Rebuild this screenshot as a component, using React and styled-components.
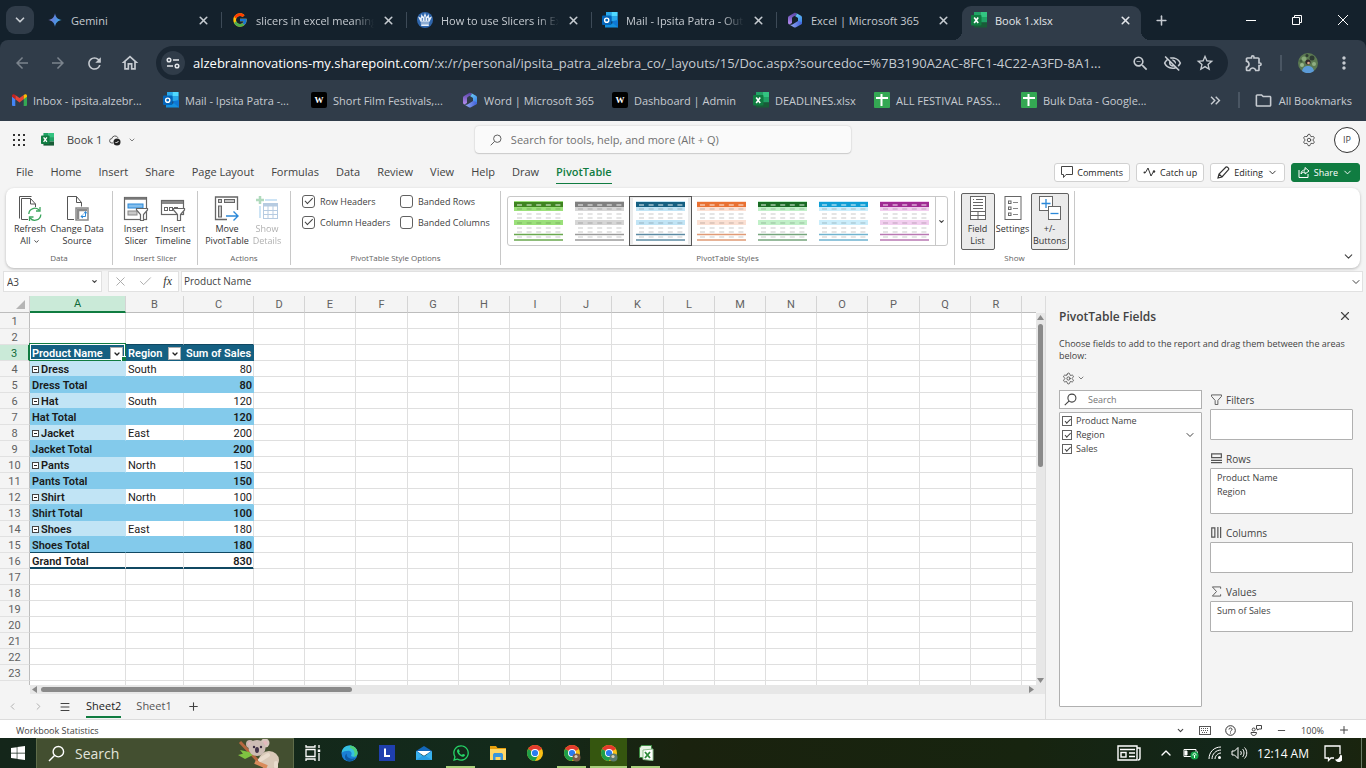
import React from 'react';
import styled, { createGlobalStyle, css } from 'styled-components';
import { FcGoogle } from 'react-icons/fc';
import { FaWindows, FaWhatsapp } from 'react-icons/fa';
import {
  MdArrowBack, MdArrowForward, MdRefresh, MdOutlineHome, MdStarOutline, MdOutlineFolder,
  MdOutlineVisibilityOff, MdOutlineExtension, MdMoreVert, MdZoomOut, MdKeyboardDoubleArrowRight,
} from 'react-icons/md';
import { ChevronDown, ChevronUp, ChevronLeft, ChevronRight, X, Plus, Minus, Menu, Check, Settings } from 'lucide-react';

const palette = {
  strip: '#14212c',
  chrome: '#303c49',
  omnibox: '#1b2733',
  chromeText: '#c6cbd1',
  page: '#f4f4f4',
  line: '#e1e1e1',
  text: '#424242',
  green: '#107c41',
  pivotHead: '#156082',
  pivotDark: '#104862',
  pivotMid: '#83caeb',
  pivotLight: '#c1e4f5',
};

const uiFont = "'Segoe UI', 'Open Sans', 'Noto Sans', sans-serif";

const GlobalStyle = createGlobalStyle`
  * { box-sizing: border-box; }
  body {
    margin: 0;
    font-family: ${uiFont};
    font-size: 11px;
    color: ${palette.text};
    background: ${palette.page};
  }
  button, input {
    font: inherit;
    color: inherit;
  }
  button {
    border: 0;
    padding: 0;
    background: none;
    display: inline-flex;
    align-items: center;
    justify-content: center;
  }
  a { color: inherit; text-decoration: none; }
  svg { display: block; flex: none; }
`;

const Page = styled.div`
  display: flex;
  flex-direction: column;
  height: 100vh;
  overflow: hidden;
`;

/* ---------- logos ---------- */

const GeminiLogo = () => (
  <svg width="16" height="16" viewBox="0 0 16 16">
    <defs>
      <linearGradient id="gem" x1="0" x2="1" y1="0.3" y2="0.6">
        <stop offset="0" stopColor="#8e75c8" />
        <stop offset="0.45" stopColor="#5a86e0" />
        <stop offset="1" stopColor="#35b6e6" />
      </linearGradient>
    </defs>
    <path fill="url(#gem)" d="M8 1.2C8.5 5 11 7.5 14.8 8 11 8.500 8.500 11 8 14.800 7.500 11 5 8.500 1.200 8 5 7.500 7.500 5 8 1.200z" />
  </svg>
);

const CrownLogo = () => (
  <svg width="16" height="16" viewBox="0 0 16 16">
    <circle cx="8" cy="8" r="8" fill="#2f66ac" />
    <path fill="#e9f1fa" d="M3.500 9.800 1 4.500l3 1.300L4.200 2 6.500 5 8 .8 9.500 5l2.300-3 .2 3.800 3-1.300-2.500 5.300z" />
    <path stroke="#2f66ac" strokeWidth="0.9" d="M5.300 8.800V6M8 8.800V4.500M10.700 8.800V6" />
    <path fill="#e9f1fa" d="M3.800 10.600h8.400v1H3.800zM4.200 12.300h7.600v1.800H4.200z" />
  </svg>
);

const OutlookLogo = () => (
  <svg width="16" height="16" viewBox="0 0 16 16">
    <path fill="#0a6cbd" d="M4 0h11.500v9H4z" />
    <path fill="#28a8ea" d="M4 0h5.500v4.500H4z" />
    <path fill="#50d9ff" d="M9.500 0h6v4.500h-6z" />
    <path fill="#28a8ea" d="M9.500 4.500h6V9h-6z" />
    <path fill="#1490df" d="M3 15.500V9l6 3 7-4v7.500z" />
    <path fill="#0f78d4" d="M9 9.500 16 15.500V8z" />
    <rect x="0" y="3.500" width="9.500" height="9.500" rx="1" fill="#0364b8" />
    <circle cx="4.700" cy="8.200" r="2.100" fill="none" stroke="#fff" strokeWidth="1.400" />
  </svg>
);

const MicrosoftLogo = () => (
  <svg width="16" height="16" viewBox="0 0 16 16">
    <defs>
      <linearGradient id="msA" x1="0" x2="1" y1="0" y2="0">
        <stop offset="0" stopColor="#9fb0f5" />
        <stop offset="1" stopColor="#3d5fd8" />
      </linearGradient>
      <linearGradient id="msB" x1="0.5" x2="0.4" y1="0" y2="1">
        <stop offset="0" stopColor="#5a45a8" />
        <stop offset="1" stopColor="#b58cf0" />
      </linearGradient>
      <linearGradient id="msC" x1="0" x2="0.5" y1="0" y2="1">
        <stop offset="0" stopColor="#6fd0f5" />
        <stop offset="1" stopColor="#3f86ea" />
      </linearGradient>
    </defs>
    <path fill="url(#msB)" d="M7.500.8 2 4C1.300 4.400 1 5 1 5.800v4.700c0 1 .6 1.600 1.300 2L5 11V6.500c0-.8.3-1.300 1-1.700L9.500 3V1.200C9 .7 8.200.5 7.500.8z" />
    <path fill="url(#msC)" d="M9.500 1.200 14 3.800c.7.4 1 1 1 1.800v5c0 .8-.3 1.400-1 1.800l-3-2V6L8 4l1.500-1z" />
    <path fill="url(#msA)" d="M14 12.400 9 15.300c-.8.4-1.400.4-2.200 0l-4.500-2.700C3.500 13 5 12.700 5.800 12.200L11 9v-.5l4 2c0 .9-.3 1.500-1 1.900z" />
  </svg>
);

const ExcelLogo = ({ size = 16 }) => (
  <svg width={size} height={size} viewBox="0 0 16 16">
    <path fill="#21a366" d="M3 0h6.500v5H3z" />
    <path fill="#33c481" d="M9.500 0H16v5H9.500z" />
    <path fill="#107c41" d="M3 5h6.500v5.500H3z" />
    <path fill="#21a366" d="M9.500 5H16v5.500H9.500z" />
    <path fill="#185c37" d="M3 10.500h13v5H3z" />
    <rect x="0" y="3" width="10.500" height="10.500" rx="1" fill="#107c41" />
    <path fill="none" stroke="#fff" strokeWidth="1.600" d="M3.200 5.500l4 5.500M7.200 5.500l-4 5.500" />
  </svg>
);

const GmailLogo = () => (
  <svg width="15" height="12" viewBox="0 0 15 12">
    <path fill="#4285f4" d="M0 2.200 3.300 4.700V12H1a1 1 0 0 1-1-1z" />
    <path fill="#34a853" d="M15 2.200 11.700 4.700V12H14a1 1 0 0 0 1-1z" />
    <path fill="#ea4335" d="M3.300.9 7.500 4.100l4.200-3.200v4.400L7.500 8.500 3.300 5.300z" />
    <path fill="#c5221f" d="M0 1.800C0 .1 1.900-.3 3.300.9v4.400L0 2.800z" />
    <path fill="#fbbc04" d="M15 1.800C15 .1 13.100-.3 11.700.9v4.400L15 2.800z" />
  </svg>
);

const SheetLogo = () => (
  <svg width="16" height="16" viewBox="0 0 16 16">
    <rect width="16" height="16" rx="1" fill="#34a853" />
    <path fill="#fff" d="M2 5h12v2H2zM6.500 2h2v12h-2z" />
  </svg>
);

const ChromeLogo = ({ badge }) => (
  <svg width="18" height="18" viewBox="0 0 18 18">
    <circle cx="9" cy="9" r="8" fill="#fbc116" />
    <path fill="#e33b2e" d="M9 9 2.100 5A8 8 0 0 1 15.900 5z" />
    <path fill="#1e9e48" d="M9 9 2.100 5A8 8 0 0 0 9 17l3.400-6z" />
    <circle cx="9" cy="9" r="4" fill="#fff" />
    <circle cx="9" cy="9" r="3.100" fill="#2a7cf0" />
    {badge && <circle cx="13.500" cy="13.500" r="4" fill={badge} />}
    {badge && <circle cx="13" cy="12.500" r="1.600" fill="#d9cdb8" />}
  </svg>
);

const WixMark = styled.span`
  display: flex;
  align-items: center;
  justify-content: center;
  flex: none;
  width: 16px;
  height: 16px;
  border-radius: 2px;
  background: #000;
  color: #fff;
  font: bold 9px 'Liberation Serif', serif;
`;

/* ---------- browser ---------- */

const TabStrip = styled.header`
  display: flex;
  align-items: center;
  flex: none;
  height: 40px;
  padding-left: 6px;
  background: ${palette.strip};
  color: ${palette.chromeText};
`;

const TabSearch = styled.button`
  width: 28px;
  height: 28px;
  margin-right: 3px;
  border-radius: 9px;
  background: ${palette.chrome};
`;

const Tab = styled.div`
  position: relative;
  display: flex;
  align-items: center;
  gap: 8px;
  flex: 0 1 185px;
  min-width: 0;
  height: 16px;
  padding: 0 11px 0 10px;
  border-right: 1px solid ${(props) => (props.$last ? 'transparent' : '#3d4a57')};

  ${(props) => props.$active && css`
    flex-basis: 179px;
    align-self: flex-end;
    height: 34px;
    padding: 0 9px 6px;
    border: 0;
    border-radius: 9px 9px 0 0;
    background: ${palette.chrome};
    color: #e3e6ea;

    &::before, &::after {
      content: '';
      position: absolute;
      bottom: 0;
      width: 9px;
      height: 9px;
    }
    &::before {
      right: 100%;
      background: radial-gradient(circle at 0 0, transparent 9px, ${palette.chrome} 9px);
    }
    &::after {
      left: 100%;
      background: radial-gradient(circle at 100% 0, transparent 9px, ${palette.chrome} 9px);
    }
  `}
`;

const TabTitle = styled.span`
  flex: 1;
  min-width: 0;
  overflow: hidden;
  white-space: nowrap;
  font-size: 11px;
  mask-image: ${(props) => (props.$fade ? 'linear-gradient(90deg, #000 82%, transparent)' : 'none')};
`;

const NewTab = styled.button`
  width: 40px;
  height: 28px;
`;

const WindowControls = styled.div`
  display: flex;
  margin-left: auto;
  color: #fff;

  button {
    width: 46px;
    height: 30px;
  }
`;

const ToolbarBack = styled.div`
  flex: none;
  background: ${palette.strip};
`;

const Toolbar = styled.nav`
  display: flex;
  align-items: center;
  height: 46px;
  padding: 0 12px;
  border-radius: 8px 8px 0 0;
  background: ${palette.chrome};
  color: ${palette.chromeText};
`;

const NavButton = styled.button`
  width: 20px;
  margin-right: 16px;
  opacity: ${(props) => (props.disabled ? 0.5 : 1)};
`;

const Omnibox = styled.div`
  display: flex;
  align-items: center;
  flex: 1;
  min-width: 0;
  gap: 13px;
  height: 34px;
  padding: 0 13px 0 5px;
  border-radius: 17px;
  background: ${palette.omnibox};
`;

const SiteInfo = styled.button`
  flex: none;
  width: 24px;
  height: 24px;
  margin-right: -5px;
  border-radius: 50%;
  background: ${palette.chrome};
`;

const Url = styled.div`
  flex: 1;
  min-width: 0;
  overflow: hidden;
  white-space: nowrap;
  text-overflow: ellipsis;
  font-size: 13px;

  b {
    font-weight: 400;
    color: #fff;
  }
`;

const ToolbarEnd = styled.div`
  display: flex;
  align-items: center;
  gap: 16px;
  margin-left: 16px;
`;

const Divider = styled.i`
  flex: none;
  width: 2px;
  height: 16px;
  background: #4a5663;
`;

const BookmarkBar = styled.nav`
  display: flex;
  align-items: center;
  flex: none;
  height: 35px;
  padding: 0 14px 7px 12px;
  background: ${palette.chrome};
  color: ${palette.chromeText};
`;

const Bookmark = styled.a`
  display: flex;
  align-items: center;
  gap: 6px;
  flex: 0 1 ${(props) => props.$width}px;
  min-width: 0;
  white-space: nowrap;
`;

const BookmarkEnd = styled.div`
  display: flex;
  align-items: center;
  gap: 14px;
  margin-left: auto;
  white-space: nowrap;

  a {
    display: flex;
    align-items: center;
    gap: 6px;
  }
`;

/* ---------- app header ---------- */

const AppHeader = styled.header`
  display: grid;
  grid-template-columns: 10fr 376px 11fr;
  align-items: center;
  flex: none;
  height: 37px;
  padding: 0 6px 0 12px;
`;

const FileTitle = styled.div`
  display: flex;
  align-items: center;
  gap: 7px;

  svg:first-child { margin-right: 8px; }
  span { margin-left: 6px; }
`;

const HeaderSearch = styled.label`
  display: flex;
  align-items: center;
  gap: 9px;
  height: 27px;
  padding: 0 15px;
  border-radius: 4px;
  background: #fafafa;
  box-shadow: 0 0 2px rgba(0, 0, 0, 0.2), 0 1px 1px rgba(0, 0, 0, 0.12);
  color: #616161;

  input {
    flex: 1;
    border: 0;
    padding: 0;
    outline: 0;
    background: none;
  }
  input::placeholder { color: #707070; }
`;

const HeaderEnd = styled.div`
  display: flex;
  align-items: center;
  justify-content: flex-end;
  gap: 18px;
`;

const Avatar = styled.button`
  width: 26px;
  height: 26px;
  border: 1px solid #333;
  border-radius: 50%;
  background: #fff;
  font-size: 9px;
`;

const MenuBar = styled.nav`
  display: flex;
  align-items: center;
  flex: none;
  height: 30px;
  padding: 0 6px 0 16px;
`;

const MenuTabs = styled.div`
  display: flex;
  gap: 17px;
`;

const MenuTab = styled.a`
  height: 21px;
  line-height: 18px;
  white-space: nowrap;
  ${(props) => props.$active && css`
    color: ${palette.green};
    font-weight: 600;
    border-bottom: 1px solid ${palette.green};
  `}
`;

const MenuActions = styled.div`
  display: flex;
  gap: 6px;
  margin: 0 0 2px auto;
`;

const ActionButton = styled.button`
  gap: 4px;
  height: 19px;
  padding: 0 6px;
  border: 1px solid ${(props) => (props.$primary ? palette.green : '#d1d1d1')};
  border-radius: 3px;
  background: ${(props) => (props.$primary ? palette.green : '#fff')};
  color: ${(props) => (props.$primary ? '#fff' : '#242424')};
  font-size: 9px;
`;

/* ---------- ribbon ---------- */

const Ribbon = styled.section`
  display: flex;
  flex: none;
  height: 80px;
  margin: 0 6px;
  padding: 3px 0;
  border-radius: 8px;
  background: #fff;
  box-shadow: 0 1px 3px rgba(0, 0, 0, 0.25);
`;

const Group = styled.div`
  display: flex;
  flex-direction: column;
  flex: none;
  width: ${(props) => props.$width}px;
  border-right: 1px solid #c8c8c8;
`;

const GroupBody = styled.div`
  display: flex;
  flex: 1;
  justify-content: ${(props) => props.$align || 'center'};
  padding: 2px 3px 0;
`;

const GroupLabel = styled.div`
  height: 14px;
  line-height: 14px;
  text-align: center;
  font-size: 8px;
  color: #616161;
`;

const RibbonButton = styled.button`
  flex-direction: column;
  justify-content: flex-start;
  gap: 2px;
  width: ${(props) => props.$width}px;
  height: 57px;
  padding-top: 1px;
  border: 1px solid ${(props) => (props.$on ? '#616161' : 'transparent')};
  border-radius: 2px;
  background: ${(props) => (props.$on ? '#ebebeb' : 'none')};
  font-size: 9px;
  line-height: 12px;
  color: #333;
  opacity: ${(props) => (props.disabled ? 0.4 : 1)};
  white-space: pre;

  span {
    display: block;
    text-align: center;
  }
  span svg {
    display: inline;
    vertical-align: -1px;
  }
`;

const Options = styled.div`
  display: grid;
  grid-template-columns: 98px auto;
  align-content: start;
  justify-content: start;
  row-gap: 7px;
  flex: 1;
  padding: 1px 0 0 8px;
`;

const Option = styled.label`
  display: flex;
  align-items: center;
  gap: 5px;
  height: 14px;
  font-size: 9px;
  white-space: nowrap;
`;

const CheckBox = styled.input.attrs({ type: 'checkbox' })`
  appearance: none;
  position: relative;
  flex: none;
  width: ${(props) => props.$size}px;
  height: ${(props) => props.$size}px;
  margin: 0;
  border: 1px solid #616161;
  border-radius: ${(props) => (props.$size > 10 ? 3 : 0)}px;
  background: #fff;

  &:checked::after {
    content: '';
    position: absolute;
    left: 20%;
    top: 20%;
    width: 60%;
    height: 30%;
    border: solid #424242;
    border-width: 0 0 1px 1px;
    transform: rotate(-45deg);
  }
`;

const Gallery = styled.div`
  display: flex;
  height: 50px;
  margin-top: 3px;
  border: 1px solid #c8c8c8;
  border-radius: 3px;

  > button:last-child {
    width: 12px;
    border-left: 1px solid #c8c8c8;
  }
`;

const Swatch = styled.button`
  width: 61px;
  height: 48px;
  outline: ${(props) => (props.$on ? '1px solid #555' : 'none')};
  background: ${(props) => (props.$on ? '#ebebeb' : 'none')};
  svg {
    background: #fff;
    box-shadow: 0 0 0 3px #fff;
  }
`;

const RibbonCollapse = styled.button`
  align-self: flex-end;
  margin: 0 5px 2px auto;
`;

/* ---------- formula bar ---------- */

const FormulaBar = styled.section`
  display: flex;
  flex: none;
  margin: 3px 3px 0;
  height: 21px;
  font-size: 10px;
`;

const NameBox = styled.div`
  display: flex;
  align-items: center;
  width: 99px;
  margin-right: 6px;
  padding: 0 3px;
  border: 1px solid ${palette.line};
  background: #fff;

  input {
    flex: 1;
    min-width: 0;
    border: 0;
    padding: 0;
    outline: 0;
  }
`;

const FormulaTools = styled.div`
  display: flex;
  align-items: center;
  justify-content: space-between;
  width: 71px;
  padding: 0 6px 0 4px;
  border: 1px solid ${palette.line};
  background: #fff;
  color: #a8a8a8;

  button:last-child {
    color: #333;
    font: italic 12px 'Liberation Serif', serif;
  }
`;

const FormulaInput = styled.div`
  display: flex;
  align-items: center;
  flex: 1;
  margin-left: 2px;
  padding-left: 2px;
  border: 1px solid ${palette.line};
  background: #fff;

  input {
    flex: 1;
    border: 0;
    padding: 0 0 2px;
    outline: 0;
  }
`;

/* ---------- sheet ---------- */

const Workspace = styled.main`
  display: flex;
  flex: 1;
  min-height: 0;
  padding-top: 4px;
  border-bottom: 1px solid #dcdcdc;
`;

const SheetColumn = styled.section`
  display: flex;
  flex-direction: column;
  flex: 1;
  min-width: 0;
`;

const SheetRow = styled.div`
  display: flex;
  flex: 1;
  min-height: 0;
`;

const GridWrap = styled.div`
  flex: 1;
  min-width: 0;
  overflow: hidden;
`;

const Grid = styled.table`
  table-layout: fixed;
  width: 0;
  border-collapse: separate;
  border-spacing: 0;
  background: #fff;
  font-family: 'Aptos Narrow', Roboto, sans-serif;
  font-size: 11px;
  line-height: 13px;
`;

const ColumnHead = styled.th`
  height: 17px;
  padding: 0;
  border-right: 1px solid #d4d4d4;
  border-bottom: ${(props) => (props.$on ? `2px solid ${palette.green}` : '1px solid #bdbdbd')};
  background: ${(props) => (props.$on ? '#caead8' : palette.page)};
  color: ${(props) => (props.$on ? '#0e6b38' : '#616161')};
  font-weight: 400;
`;

const RowHead = styled.th`
  height: 16px;
  padding: 2px 0 0;
  border-right: ${(props) => (props.$on ? `2px solid ${palette.green}` : '1px solid #bdbdbd')};
  border-bottom: 1px solid ${palette.line};
  background: ${(props) => (props.$on ? '#caead8' : palette.page)};
  color: ${(props) => (props.$on ? '#0e6b38' : '#616161')};
  font-weight: 400;
`;

const Corner = styled(ColumnHead)`
  svg { margin: 0 4px 0 auto; }
`;

const Cell = styled.td`
  position: relative;
  height: 16px;
  padding: 2px 1px 0 2px;
  border-right: 1px solid ${(props) => props.$fill || '#dfdfdf'};
  border-bottom: 1px solid ${(props) => props.$under || props.$fill || '#dfdfdf'};
  background: ${(props) => props.$fill || '#fff'};
  box-shadow: ${(props) => (props.$thick ? `inset 0 -1px ${palette.pivotDark}` : 'none')};
  color: ${(props) => (props.$fill === palette.pivotHead ? '#fff' : '#1a1a1a')};
  font-weight: ${(props) => (props.$bold ? 600 : 400)};
  text-align: ${(props) => (props.$number ? 'right' : 'left')};
  white-space: nowrap;
`;

const CellFlex = styled.div`
  display: flex;
  align-items: center;
  gap: 2px;
  height: 13px;
`;

const FilterButton = styled.button`
  width: 13px;
  height: 13px;
  margin-left: auto;
  margin-right: 1px;
  border: 1px solid #ababab;
  background: #fff;
  color: #222;
`;

const Collapse = styled.button`
  width: 7px;
  height: 7px;
  border: 1px solid #444;
  background: #fff;

  &::after {
    content: '';
    width: 3px;
    height: 1px;
    background: #222;
  }
`;

const Selection = styled.i`
  position: absolute;
  inset: -2px -1px -1px -1px;
  border: 1px solid ${palette.green};
  box-shadow: inset 0 0 0 1px #fff;
  pointer-events: none;

  &::after {
    content: '';
    position: absolute;
    right: -2px;
    bottom: -2px;
    width: 5px;
    height: 5px;
    border: 1px solid #fff;
    border-width: 1px 0 0 1px;
    background: ${palette.green};
  }
`;

const VerticalScroll = styled.div`
  display: flex;
  flex-direction: column;
  align-items: center;
  justify-content: space-between;
  width: 9px;
  margin-top: 17px;
  padding: 2px 0;
  background: #e7e7e7;
`;

const VerticalThumb = styled.i`
  width: 5px;
  height: 143px;
  margin: 4px 0 auto;
  border-radius: 3px;
  background: #8a8a8a;
`;

const HorizontalScroll = styled.div`
  display: flex;
  align-items: center;
  flex: none;
  height: 9px;
  margin-left: 30px;
  padding: 0 11px 0 2px;
  background: #e7e7e7;
`;

const HorizontalThumb = styled.i`
  width: 31%;
  height: 5px;
  margin: 0 auto 0 4px;
  border-radius: 3px;
  background: #8a8a8a;
`;

const SheetTabs = styled.div`
  display: flex;
  align-items: center;
  flex: none;
  height: 25px;
  padding-left: 7px;

  > button { margin-right: 15px; }
`;

const SheetTab = styled.button`
  height: 23px;
  border-bottom: 2px solid ${(props) => (props.$active ? palette.green : 'transparent')};
  color: ${(props) => (props.$active ? '#222' : '#555')};
`;

/* ---------- fields panel ---------- */

const Panel = styled.aside`
  display: flex;
  flex-direction: column;
  flex: none;
  width: 321px;
  padding: 10px 13px 12px;
  border-left: 1px solid #dcdcdc;
`;

const PanelHead = styled.div`
  display: flex;
  align-items: center;
  justify-content: space-between;
  height: 20px;
  padding-right: 1px;

  h2 {
    margin: 0;
    font-size: 12px;
    font-weight: 600;
  }
`;

const PanelText = styled.p`
  margin: 12px 0 8px;
  font-size: 9px;
  line-height: 12px;
`;

const PanelSettings = styled.button`
  align-self: flex-start;
  gap: 2px;
  height: 16px;
  padding-left: 3px;
`;

const PanelBody = styled.div`
  display: grid;
  grid-template-columns: minmax(0, 1fr) minmax(0, 1fr);
  flex: 1;
  gap: 8px;
  margin-top: 4px;
`;

const FieldColumn = styled.div`
  display: flex;
  flex-direction: column;
  gap: 3px;
`;

const FieldSearch = styled.label`
  display: flex;
  align-items: center;
  gap: 11px;
  height: 19px;
  padding: 0 4px;
  border: 1px solid #b0b0b0;
  background: #fff;

  input {
    flex: 1;
    min-width: 0;
    border: 0;
    padding: 0;
    outline: 0;
    font-size: 9px;
  }
`;

const Box = styled.div`
  flex: ${(props) => (props.$height ? 'none' : 1)};
  height: ${(props) => (props.$height ? `${props.$height}px` : 'auto')};
  padding: ${(props) => (props.$height ? '2px 6px' : '1px 2px')};
  border: 1px solid #b0b0b0;
  border-radius: 1px;
  background: #fff;
  font-size: 9px;
  line-height: 14px;
`;

const Field = styled.label`
  display: flex;
  align-items: center;
  gap: 4px;
  height: 14px;
  > svg { margin: 0 3px 0 auto; }
`;

const Zone = styled.div`
  margin-bottom: 9px;
`;

const ZoneLabel = styled.div`
  display: flex;
  align-items: center;
  gap: 4px;
  height: 19px;
  padding-left: 1px;
  font-size: 10px;
`;

/* ---------- status bar and taskbar ---------- */

const StatusBar = styled.footer`
  display: flex;
  align-items: center;
  flex: none;
  height: 18px;
  padding: 2px 16px 0;
  background: #fff;
  font-size: 9px;
`;

const StatusTools = styled.div`
  display: flex;
  align-items: center;
  gap: 14px;
  margin-left: auto;
`;

const Taskbar = styled.footer`
  display: flex;
  flex: none;
  height: 30px;
  background: linear-gradient(90deg, #14261a 0%, #132a1b 38%, #1a220e 50%, #17240f 75%, #12261a 90%, #1a240e 100%);
  color: #fff;
`;

const StartButton = styled.button`
  width: 36px;
`;

const TaskSearch = styled.label`
  display: flex;
  align-items: center;
  gap: 10px;
  width: 258px;
  padding: 0 12px 0 11px;
  border: 1px solid #5f6c4a;
  border-bottom: 0;
  background: #434f30;

  input {
    flex: 1;
    min-width: 0;
    border: 0;
    padding: 0;
    outline: 0;
    background: none;
    font-size: 14px;
  }
  input::placeholder { color: #e2e5dc; }
`;

const TaskButton = styled.button`
  position: relative;
  width: 37px;
  height: 30px;
  background: ${(props) => (props.$active ? '#35560f' : 'none')};

  &::after {
    content: '';
    display: ${(props) => (props.$open ? 'block' : 'none')};
    position: absolute;
    bottom: 0;
    left: ${(props) => (props.$active ? 0 : 4)}px;
    right: ${(props) => (props.$active ? 0 : 4)}px;
    height: 2px;
    background: #a9cf7c;
  }
`;

const Clock = styled.time`
  white-space: nowrap;
`;

const Tray = styled.div`
  display: flex;
  align-items: center;
  gap: 9px;
  margin-left: auto;
  padding-right: 4px;
  font-size: 12px;

  svg:first-child { margin-right: 8px; }
  ${Clock} + svg { margin-left: 6px; }

  > i {
    width: 1px;
    height: 30px;
    margin-left: 10px;
    background: #6a7a66;
  }
`;

/* ---------- drawings ---------- */

const SearchGlyph = ({ size = 12 }) => (
  <svg width={size} height={size} viewBox="0 0 12 12" fill="none" stroke="currentColor">
    <circle cx="7.300" cy="4.700" r="3.700" />
    <path d="M4.600 7.400.7 11.300" />
  </svg>
);

const RefreshIcon = () => (
  <svg width="24" height="26" viewBox="0 0 24 26" fill="none" stroke="#555">
    <path d="M1.500 23.500v-22h12" />
    <path d="M10 24.500H3.500v-21h9l5 5.500v3M12.500 3.500V9h5" />
    <g stroke="#3ba55d" strokeWidth="1.300">
      <path d="M10.800 19a6 6 0 0 1 10.700-3.500M22.800 19.500a6 6 0 0 1-10.700 3.500" />
      <path d="M22 12v4h-4M11.500 26v-4h4" />
    </g>
  </svg>
);

const SourceIcon = () => (
  <svg width="24" height="26" viewBox="0 0 24 26" fill="none" stroke="#555">
    <path d="M9 24.500H2.500v-23h9l5 6v4M11.500 1.500v6h5" />
    <rect x="11" y="13" width="12" height="12" fill="#fff" stroke="#8a8a8a" strokeWidth="1.500" />
    <path stroke="#8a8a8a" strokeWidth="2.500" d="M12 15h10M13 14v10" />
    <path stroke="#2b88d8" d="M16 21.500h4.500V17M18 23l-2-1.500 2-2M19 18.500l1.500-2 1.500 2" />
  </svg>
);

const Funnel = () => (
  <path fill="#fff" stroke="#666" strokeWidth="1.200" d="M13.500 13.500h11v1.500l-4 4.500v6h-3v-6l-4-4.500z" />
);

const SlicerIcon = () => (
  <svg width="26" height="26" viewBox="0 0 26 26" fill="none" stroke="#666">
    <rect x="1.500" y="2.500" width="22" height="22" strokeWidth="1.200" />
    <path stroke="#777" strokeWidth="2.500" d="M2 3.500h21" />
    <rect x="5" y="9" width="15" height="4" fill="#83beec" stroke="#2b88d8" />
    <rect x="5" y="16" width="9" height="4" fill="#c8c8c8" stroke="#888" />
    <Funnel />
  </svg>
);

const TimelineIcon = () => (
  <svg width="26" height="26" viewBox="0 0 26 26" fill="none" stroke="#666">
    <rect x="1.500" y="5.500" width="22" height="14" strokeWidth="1.200" />
    <path stroke="#888" strokeWidth="3" d="M2 7.500h21" />
    <rect x="4.500" y="12.500" width="3" height="3" />
    <rect x="9.500" y="12.500" width="3" height="3" />
    <rect x="14.500" y="12.500" width="3" height="3" />
    <Funnel />
  </svg>
);

const MoveIcon = () => (
  <svg width="26" height="26" viewBox="0 0 26 26" fill="none" stroke="#666">
    <path strokeWidth="1.300" d="M23.500 15V2h-22v22.500H13" />
    <rect x="4.500" y="4.500" width="3" height="3" fill="#c8c8c8" />
    <rect x="10.500" y="4.500" width="10" height="3" fill="#c8c8c8" />
    <rect x="4.500" y="11" width="3" height="11" fill="#c8c8c8" />
    <path stroke="#2b88d8" strokeWidth="1.400" d="M12 21h12M19.500 16.500 24 21l-4.500 4.500" />
  </svg>
);

const DetailsIcon = () => (
  <svg width="24" height="26" viewBox="0 0 24 26" fill="none" stroke="#8a8a8a">
    <path stroke="#3ba55d" strokeWidth="2.500" d="M5 1v8M1 5h8" />
    <path stroke="#5aa8e0" strokeWidth="1.500" d="M10 5h12M5 11v12" />
    <rect x="8.500" y="8.500" width="14" height="15" stroke="#4a80b5" />
    <path stroke="#4a80b5" strokeWidth="3" d="M9 10h13" />
    <path stroke="#4a80b5" d="M8.500 15.500h14M8.500 19.500h14M13 9v14M18 9v14" />
  </svg>
);

const FieldListIcon = () => (
  <svg width="18" height="26" viewBox="0 0 18 26" fill="none" stroke="#666">
    <rect x="1.500" y="1.500" width="15" height="23" fill="#fff" />
    <path d="M4 4.500h1M7 4.500h7M4 7.500h10M4 10.500h10M4 13.500h10M1.500 16.500h15M1.500 20.500h15M9 16.500v8" />
  </svg>
);

const SettingsIcon = () => (
  <svg width="18" height="26" viewBox="0 0 18 26" fill="none" stroke="#666">
    <rect x="1" y="1.500" width="16" height="23" />
    <path d="M9 7.500h5M9 13.500h5M9 19.500h5" stroke="#888" />
    <rect x="4.500" y="6" width="2.500" height="2.500" />
    <rect x="4.500" y="12" width="2.500" height="2.500" />
    <rect x="4.500" y="18" width="2.500" height="2.500" />
  </svg>
);

const PlusMinusIcon = () => (
  <svg width="24" height="26" viewBox="0 0 24 26" fill="none" stroke="#666">
    <rect x="1.500" y="1.500" width="13" height="14" fill="#fff" />
    <path stroke="#2b88d8" strokeWidth="1.300" d="M8 4v9M3.500 8.500h9" />
    <rect x="10.500" y="11.500" width="12" height="13" fill="#fff" />
    <path stroke="#2b88d8" strokeWidth="1.300" d="M12.500 18.500h8" />
  </svg>
);

const StyleThumb = ({ head, band, line }) => (
  <svg width="49" height="40" viewBox="0 0 49 40">
    <rect y="0" width="49" height="6" fill={head} />
    <rect y="0" width="49" height="1" fill={band} />
    <rect y="6" width="49" height="4" fill={band} />
    <rect y="19" width="49" height="5" fill={band} />
    <path stroke="#e4e4e4" strokeWidth="2" strokeDasharray="5 4.600" d="M3 13h46M3 17h46M3 27h46M3 31h46M3 36h46" />
    <path stroke="#000" opacity=".1" strokeWidth="2" strokeDasharray="5 4.600" d="M3 8h46M3 22h46" />
    <path stroke="#fff" opacity=".45" strokeWidth="2" strokeDasharray="5 4.600" d="M3 4h46" />
    <path stroke={line} strokeWidth="1.500" d="M0 33.500h49M0 39h49" />
  </svg>
);

const Koala = () => (
  <svg width="44" height="29" viewBox="0 0 44 29">
    <path stroke="#b5673f" strokeWidth="3" d="M3 3l20 21 6 5" />
    <path fill="#7fc241" d="M1 16l11-3 4 3-8 4zM3 11l9 2 2 4-7-1z" />
    <ellipse cx="32" cy="21" rx="10" ry="9" fill="#d9c9b8" />
    <circle cx="13" cy="5" r="4" fill="#c9b8b0" />
    <circle cx="13" cy="5" r="2" fill="#e3b9bd" />
    <circle cx="28" cy="4" r="4.500" fill="#d6c6bd" />
    <circle cx="28" cy="4" r="2.300" fill="#e3b9bd" />
    <ellipse cx="20" cy="9" rx="8.500" ry="8" fill="#cdbdb5" />
    <circle cx="17" cy="8" r="1.200" fill="#3a2c3f" />
    <circle cx="24" cy="8" r="1.200" fill="#3a2c3f" />
    <ellipse cx="20" cy="11" rx="2" ry="3" fill="#43344a" />
    <path stroke="#e9dccd" strokeWidth="4" strokeLinecap="round" d="M31 16l-8 5M39 24v4" />
    <path stroke="#d98b5c" strokeWidth="4" d="M18 23l12 5" />
  </svg>
);

/* ---------- data ---------- */

const tabs = [
  { title: 'Gemini', icon: <GeminiLogo /> },
  { title: 'slicers in excel meaning', icon: <FcGoogle size={16} />, fade: true },
  { title: 'How to use Slicers in Excel', icon: <CrownLogo />, fade: true },
  { title: 'Mail - Ipsita Patra - Outlook', icon: <OutlookLogo />, fade: true },
  { title: 'Excel | Microsoft 365', icon: <MicrosoftLogo />, last: true },
  { title: 'Book 1.xlsx', icon: <ExcelLogo />, active: true },
];

const bookmarks = [
  { title: 'Inbox - ipsita.alzebr...', icon: <GmailLogo />, width: 151 },
  { title: 'Mail - Ipsita Patra -...', icon: <OutlookLogo />, width: 148 },
  { title: 'Short Film Festivals,...', icon: <WixMark>W</WixMark>, width: 151 },
  { title: 'Word | Microsoft 365', icon: <MicrosoftLogo />, width: 150 },
  { title: 'Dashboard | Admin', icon: <WixMark>W</WixMark>, width: 141 },
  { title: 'DEADLINES.xlsx', icon: <ExcelLogo />, width: 121 },
  { title: 'ALL FESTIVAL PASS...', icon: <SheetLogo />, width: 147 },
  { title: 'Bulk Data - Google...', icon: <SheetLogo />, width: 140 },
];

const menus = ['File', 'Home', 'Insert', 'Share', 'Page Layout', 'Formulas', 'Data', 'Review', 'View', 'Help', 'Draw', 'PivotTable'];

const pivotStyles = [
  { head: '#3f8420', band: '#9be07a', line: '#6aa84f' },
  { head: '#808080', band: '#d6d6d6', line: '#9a9a9a' },
  { head: '#156082', band: '#c1e4f5', line: '#5c8aa3', on: true },
  { head: '#e97132', band: '#fbe0d3', line: '#e09a76' },
  { head: '#196b24', band: '#c1f0c8', line: '#75a57c' },
  { head: '#0f9ed5', band: '#caedfb', line: '#6fb3cf' },
  { head: '#a02b93', band: '#f2ceef', line: '#b978b2' },
];

const columns = [
  ['A', 96], ['B', 58], ['C', 70], ['D', 51], ['E', 51], ['F', 52], ['G', 51], ['H', 51], ['I', 51], ['J', 51],
  ['K', 52], ['L', 51], ['M', 51], ['N', 51], ['O', 51], ['P', 52], ['Q', 51], ['R', 51], ['', 51],
];

const rowCount = 24;

const items = [
  ['Dress', 'South', 80],
  ['Hat', 'South', 120],
  ['Jacket', 'East', 200],
  ['Pants', 'North', 150],
  ['Shirt', 'North', 100],
  ['Shoes', 'East', 180],
];

const zones = [
  { name: 'Filters', height: 31, fields: [] },
  { name: 'Rows', height: 46, fields: ['Product Name', 'Region'] },
  { name: 'Columns', height: 31, fields: [] },
  { name: 'Values', height: 31, fields: ['Sum of Sales'] },
];

const zoneIcons = {
  Filters: <path d="M.5 1h11v1.500L7.500 7v4.500h-3V7L.5 2.500z" />,
  Rows: <path d="M.7 1h10.600v4H.7zM0 8h12M0 10.500h12" strokeWidth="1.300" />,
  Columns: <path d="M.8 1h3.400v10H.8zM7.500 0v12M10.500 0v12" strokeWidth="1.300" />,
  Values: <path d="M10.500 3V1h-9L6 6l-4.500 5h9V9" />,
};

const PivotCells = ({ row }) => {
  if (row === 3) {
    return (
      <>
        <Cell $fill={palette.pivotHead} $bold>
          <CellFlex>
            Product Name
            <FilterButton aria-label="Filter Product Name"><ChevronDown size={8} strokeWidth={4} /></FilterButton>
          </CellFlex>
          <Selection />
        </Cell>
        <Cell $fill={palette.pivotHead} $bold>
          <CellFlex>
            Region
            <FilterButton aria-label="Filter Region"><ChevronDown size={8} strokeWidth={4} /></FilterButton>
          </CellFlex>
        </Cell>
        <Cell $fill={palette.pivotHead} $bold>Sum of Sales</Cell>
      </>
    );
  }
  if (row >= 4 && row <= 15) {
    const [name, region, sales] = items[Math.floor((row - 4) / 2)];
    if (row % 2 === 0) {
      return (
        <>
          <Cell $fill={palette.pivotLight} $under={palette.pivotMid} $bold>
            <CellFlex><Collapse aria-label={`Collapse ${name}`} />{name}</CellFlex>
          </Cell>
          <Cell $under={palette.pivotMid}>{region}</Cell>
          <Cell $under={palette.pivotMid} $number>{sales}</Cell>
        </>
      );
    }
    const under = row === 15 ? palette.pivotDark : undefined;
    return (
      <>
        <Cell $fill={palette.pivotMid} $under={under} $bold>{name} Total</Cell>
        <Cell $fill={palette.pivotMid} $under={under} />
        <Cell $fill={palette.pivotMid} $under={under} $bold $number>{sales}</Cell>
      </>
    );
  }
  if (row === 16) {
    return (
      <>
        <Cell $under={palette.pivotDark} $thick $bold>Grand Total</Cell>
        <Cell $under={palette.pivotDark} $thick />
        <Cell $under={palette.pivotDark} $thick $bold $number>830</Cell>
      </>
    );
  }
  const under = row === 2 ? palette.pivotDark : undefined;
  return <><Cell $under={under} /><Cell $under={under} /><Cell $under={under} /></>;
};

/* ---------- sections ---------- */

const Browser = () => (
  <>
    <TabStrip>
      <TabSearch aria-label="Search tabs"><ChevronDown size={14} strokeWidth={3} /></TabSearch>
      {tabs.map((tab) => (
        <Tab key={tab.title} $active={tab.active} $last={tab.last}>
          {tab.icon}
          <TabTitle $fade={tab.fade}>{tab.title}</TabTitle>
          <button aria-label="Close tab"><X size={13} strokeWidth={3} /></button>
        </Tab>
      ))}
      <NewTab aria-label="New tab"><Plus size={15} strokeWidth={2.500} /></NewTab>
      <WindowControls>
        <button aria-label="Minimize"><svg width="10" height="10" stroke="#fff"><path d="M0 5.500h10" /></svg></button>
        <button aria-label="Restore">
          <svg width="10" height="10" fill="none" stroke="#fff"><path d="M.5 2.500h7v7h-7zM2.500 2.500v-2h7v7h-2" /></svg>
        </button>
        <button aria-label="Close"><svg width="10" height="10" stroke="#fff"><path d="M0 0l10 10M10 0 0 10" /></svg></button>
      </WindowControls>
    </TabStrip>
    <ToolbarBack>
      <Toolbar>
        <NavButton aria-label="Back" disabled><MdArrowBack size={18} /></NavButton>
        <NavButton aria-label="Forward" disabled><MdArrowForward size={18} /></NavButton>
        <NavButton aria-label="Reload"><MdRefresh size={19} /></NavButton>
        <NavButton aria-label="Home"><MdOutlineHome size={20} /></NavButton>
        <Omnibox>
          <SiteInfo aria-label="Site information">
            <svg width="14" height="12" viewBox="0 0 14 12" fill="none" stroke="#e3e6ea" strokeWidth="1.500">
              <circle cx="3" cy="3" r="1.800" /><circle cx="11" cy="9" r="1.800" />
              <path d="M7 3h6M1 9h6" />
            </svg>
          </SiteInfo>
          <Url><b>alzebrainnovations-my.sharepoint.com</b>/:x:/r/personal/ipsita_patra_alzebra_co/_layouts/15/Doc.aspx?sourcedoc=%7B3190A2AC-8FC1-4C22-A3FD-8A1...</Url>
          <MdZoomOut size={19} />
          <MdOutlineVisibilityOff size={19} />
          <MdStarOutline size={20} />
        </Omnibox>
        <ToolbarEnd>
          <MdOutlineExtension size={20} />
          <Divider />
          <svg width="20" height="20" viewBox="0 0 20 20">
            <circle cx="10" cy="10" r="10" fill="#5c7a52" />
            <circle cx="6" cy="6" r="2.500" fill="#87a878" /><circle cx="14" cy="5" r="2.500" fill="#2e3b33" />
            <circle cx="4" cy="12" r="2" fill="#9ab88c" /><circle cx="16" cy="11" r="2" fill="#8fae82" />
            <circle cx="9" cy="2.500" r="1.500" fill="#2e3b33" /><circle cx="3" cy="8" r="1.500" fill="#3f5a3c" />
            <circle cx="10" cy="9" r="2.600" fill="#30252a" /><circle cx="10.500" cy="10" r="1.300" fill="#d9a58a" />
            <path fill="#5b9bd8" d="M4 18c1-4 3-5 6-5s5 1 6 5a10 10 0 0 1-12 0z" />
          </svg>
          <MdMoreVert size={20} />
        </ToolbarEnd>
      </Toolbar>
    </ToolbarBack>
    <BookmarkBar>
      {bookmarks.map((mark) => (
        <Bookmark key={mark.title} href="#" $width={mark.width}>{mark.icon}{mark.title}</Bookmark>
      ))}
      <BookmarkEnd>
        <MdKeyboardDoubleArrowRight size={17} />
        <Divider />
        <a href="#"><MdOutlineFolder size={19} />All Bookmarks</a>
      </BookmarkEnd>
    </BookmarkBar>
  </>
);

const Header = () => (
  <>
    <AppHeader>
      <FileTitle>
        <svg width="14" height="14" viewBox="0 0 14 14" fill="#333">
          {[1, 6, 11].map((y) => [1, 6, 11].map((x) => <rect key={`${x}-${y}`} x={x} y={y} width="2" height="2" />))}
        </svg>
        <ExcelLogo size={13} />
        <span>Book 1</span>
        <svg width="12" height="12" viewBox="0 0 12 12" fill="none" stroke="#555">
          <path d="M4 9H2.800a2.200 2.200 0 0 1 0-4.400A3.300 3.300 0 0 1 9 3.800" />
          <circle cx="8" cy="8" r="3.500" fill="#222" stroke="none" />
          <path stroke="#fff" d="M6.500 8l1 1 2-2" />
        </svg>
        <ChevronDown size={8} />
      </FileTitle>
      <HeaderSearch>
        <SearchGlyph />
        <input aria-label="Search" placeholder="Search for tools, help, and more (Alt + Q)" />
      </HeaderSearch>
      <HeaderEnd>
        <Settings size={14} strokeWidth={1.500} />
        <Avatar>IP</Avatar>
      </HeaderEnd>
    </AppHeader>
    <MenuBar>
      <MenuTabs>
        {menus.map((menu) => <MenuTab key={menu} href="#" $active={menu === 'PivotTable'}>{menu}</MenuTab>)}
      </MenuTabs>
      <MenuActions>
        <ActionButton>
          <svg width="12" height="12" viewBox="0 0 12 12" fill="none" stroke="#444"><path d="M.5.5h11v8H5l-2.500 3v-3h-2z" /></svg>
          Comments
        </ActionButton>
        <ActionButton>
          <svg width="13" height="12" viewBox="0 0 13 12" fill="none" stroke="#333">
            <path d="M1 6.500h1.500L5 2l3 8 2.500-4.500" /><circle cx="1.500" cy="6.500" r="1" fill="#333" stroke="none" /><circle cx="11" cy="5.500" r="1.200" fill="#333" stroke="none" />
          </svg>
          Catch up
        </ActionButton>
        <ActionButton>
          <svg width="13" height="13" viewBox="0 0 13 13" fill="none" stroke="#333" strokeWidth="1.200"><path d="M1 12l1-4 7-7c1-.8 3.500 1.500 2.500 2.700L5 11zM2 8l3 3" /></svg>
          Editing
          <ChevronDown size={11} />
        </ActionButton>
        <ActionButton $primary>
          <svg width="12" height="12" viewBox="0 0 12 12" fill="none" stroke="#fff"><path d="M1 4v7.500h9V8M3 8c0-3 2-4 4-4V1.500L11 5 7 8V6C5.500 6 4 6.500 3 8z" /></svg>
          Share
          <ChevronDown size={11} />
        </ActionButton>
      </MenuActions>
    </MenuBar>
  </>
);

const RibbonSection = () => (
  <Ribbon>
    <Group $width={107}>
      <GroupBody $align="flex-start">
        <RibbonButton $width={42}><RefreshIcon /><span>Refresh{'\n'}All <ChevronDown size={7} strokeWidth={3} /></span></RibbonButton>
        <RibbonButton $width={52}><SourceIcon /><span>Change Data{'\n'}Source</span></RibbonButton>
      </GroupBody>
      <GroupLabel>Data</GroupLabel>
    </Group>
    <Group $width={85}>
      <GroupBody>
        <RibbonButton $width={36}><SlicerIcon /><span>Insert{'\n'}Slicer</span></RibbonButton>
        <RibbonButton $width={38}><TimelineIcon /><span>Insert{'\n'}Timeline</span></RibbonButton>
      </GroupBody>
      <GroupLabel>Insert Slicer</GroupLabel>
    </Group>
    <Group $width={93}>
      <GroupBody>
        <RibbonButton $width={46}><MoveIcon /><span>Move{'\n'}PivotTable</span></RibbonButton>
        <RibbonButton $width={34} disabled><DetailsIcon /><span>Show{'\n'}Details</span></RibbonButton>
      </GroupBody>
      <GroupLabel>Actions</GroupLabel>
    </Group>
    <Group $width={210}>
      <GroupBody>
        <Options>
          <Option><CheckBox $size={13} defaultChecked />Row Headers</Option>
          <Option><CheckBox $size={13} />Banded Rows</Option>
          <Option><CheckBox $size={13} defaultChecked />Column Headers</Option>
          <Option><CheckBox $size={13} />Banded Columns</Option>
        </Options>
      </GroupBody>
      <GroupLabel>PivotTable Style Options</GroupLabel>
    </Group>
    <Group $width={454}>
      <GroupBody>
        <Gallery>
          {pivotStyles.map((style) => (
            <Swatch key={style.head} $on={style.on} aria-label="Pivot style"><StyleThumb {...style} /></Swatch>
          ))}
          <button aria-label="More styles"><ChevronDown size={7} strokeWidth={4} /></button>
        </Gallery>
      </GroupBody>
      <GroupLabel>PivotTable Styles</GroupLabel>
    </Group>
    <Group $width={120}>
      <GroupBody>
        <RibbonButton $width={34} $on><FieldListIcon /><span>Field{'\n'}List</span></RibbonButton>
        <RibbonButton $width={36}><SettingsIcon /><span>Settings</span></RibbonButton>
        <RibbonButton $width={38} $on><PlusMinusIcon /><span>+/-{'\n'}Buttons</span></RibbonButton>
      </GroupBody>
      <GroupLabel>Show</GroupLabel>
    </Group>
    <RibbonCollapse aria-label="Collapse ribbon"><ChevronDown size={13} /></RibbonCollapse>
  </Ribbon>
);

const Sheet = () => (
  <SheetColumn>
    <SheetRow>
      <GridWrap>
        <Grid>
          <colgroup>
            <col style={{ width: 30 }} />
            {columns.map(([name, width]) => <col key={name} style={{ width }} />)}
          </colgroup>
          <thead>
            <tr>
              <Corner><svg width="9" height="9"><path fill="#b5b5b5" d="M9 0v9H0z" /></svg></Corner>
              {columns.map(([name]) => <ColumnHead key={name} $on={name === 'A'}>{name}</ColumnHead>)}
            </tr>
          </thead>
          <tbody>
            {Array.from({ length: rowCount }, (_, i) => i + 1).map((row) => (
              <tr key={row}>
                <RowHead $on={row === 3}>{row}</RowHead>
                <PivotCells row={row} />
                {columns.slice(3).map(([name]) => <Cell key={name} />)}
              </tr>
            ))}
          </tbody>
        </Grid>
      </GridWrap>
      <VerticalScroll>
        <svg width="7" height="5"><path fill="#8a8a8a" d="M3.500 0 7 5H0z" /></svg>
        <VerticalThumb />
        <svg width="7" height="5"><path fill="#8a8a8a" d="M0 0h7L3.500 5z" /></svg>
      </VerticalScroll>
    </SheetRow>
    <HorizontalScroll>
      <svg width="5" height="7"><path fill="#8a8a8a" d="M5 0v7L0 3.500z" /></svg>
      <HorizontalThumb />
      <svg width="5" height="7"><path fill="#8a8a8a" d="M0 0v7l5-3.500z" /></svg>
    </HorizontalScroll>
    <SheetTabs>
      <button aria-label="Previous sheet"><ChevronLeft size={11} color="#aaa" /></button>
      <button aria-label="Next sheet"><ChevronRight size={11} color="#aaa" /></button>
      <button aria-label="All sheets"><Menu size={12} strokeWidth={2} /></button>
      <SheetTab $active>Sheet2</SheetTab>
      <SheetTab>Sheet1</SheetTab>
      <button aria-label="New sheet"><Plus size={13} strokeWidth={2} /></button>
    </SheetTabs>
  </SheetColumn>
);

const FieldsPanel = () => (
  <Panel>
    <PanelHead>
      <h2>PivotTable Fields</h2>
      <button aria-label="Close panel"><X size={14} strokeWidth={2} /></button>
    </PanelHead>
    <PanelText>Choose fields to add to the report and drag them between the areas below:</PanelText>
    <PanelSettings aria-label="Panel settings"><Settings size={13} strokeWidth={1.500} /><ChevronDown size={8} /></PanelSettings>
    <PanelBody>
      <FieldColumn>
        <FieldSearch><SearchGlyph size={13} /><input aria-label="Search fields" placeholder="Search" /></FieldSearch>
        <Box>
          <Field><CheckBox $size={10} defaultChecked />Product Name</Field>
          <Field><CheckBox $size={10} defaultChecked />Region<ChevronDown size={12} /></Field>
          <Field><CheckBox $size={10} defaultChecked />Sales</Field>
        </Box>
      </FieldColumn>
      <div>
        {zones.map((zone) => (
          <Zone key={zone.name}>
            <ZoneLabel>
              <svg width="11" height="11" viewBox="0 0 12 12" fill="none" stroke="#555">{zoneIcons[zone.name]}</svg>
              {zone.name}
            </ZoneLabel>
            <Box $height={zone.height}>{zone.fields.map((field) => <div key={field}>{field}</div>)}</Box>
          </Zone>
        ))}
      </div>
    </PanelBody>
  </Panel>
);

const Bottom = () => (
  <>
    <StatusBar>
      Workbook Statistics
      <StatusTools>
        <ChevronDown size={9} strokeWidth={3} />
        <svg width="12" height="9" viewBox="0 0 12 9" fill="none" stroke="#555"><rect x=".5" y=".5" width="11" height="8" /><path strokeDasharray="1 1" d="M2 2.500h8M2 4.500h8M3 6.500h6" /></svg>
        <svg width="11" height="11" viewBox="0 0 11 11" fill="none" stroke="#333"><circle cx="5.500" cy="5.500" r="4.800" /><path d="M4 4.500c0-2 3-2 3 0 0 1-1.500 1-1.500 2M5.500 7.500v1" /></svg>
        <svg width="12" height="11" viewBox="0 0 12 11" fill="none" stroke="#444"><path d="M6.500.5h5v3.500H9l-1.500 1V4h-1zM1 7.500h5.500c0 4-5.500 4-5.500 0z" /><circle cx="3.700" cy="4.500" r="1.500" /></svg>
        <Minus size={11} strokeWidth={2} />
        <span>100%</span>
        <Plus size={12} strokeWidth={2} />
      </StatusTools>
    </StatusBar>
    <Taskbar>
      <StartButton aria-label="Start"><FaWindows size={16} /></StartButton>
      <TaskSearch>
        <SearchGlyph size={17} />
        <input aria-label="Taskbar search" placeholder="Search" />
        <Koala />
      </TaskSearch>
      <TaskButton aria-label="Task view">
        <svg width="16" height="16" viewBox="0 0 16 16" fill="none" stroke="#fff" strokeWidth="1.300">
          <path d="M1 4.500h9v7H1zM1 0v2h9V0M1 16v-2h9v2M14 0v3M14 8v8" /><path strokeWidth="2.500" d="M14 4.500v2.500" />
        </svg>
      </TaskButton>
      <TaskButton aria-label="Edge">
        <svg width="17" height="17" viewBox="0 0 17 17">
          <circle cx="8.500" cy="8.500" r="8" fill="#1b7fd4" />
          <path fill="#35c1e0" d="M.6 8C1 3.500 4.500.5 8.500.5c5 0 8 3.800 8 7.500 0 2.500-1.700 3.700-4 3.700-2 0-2.800-.7-2.200-1.700 1-2-.3-4.300-3-4.300C4.500 5.700 2 6.500.6 8z" />
          <path fill="#4fd07a" d="M9 .5c4.600.2 7.500 3.800 7.500 7.500 0 2.500-1.700 3.700-4 3.700 2.500-2.700.5-8-3.500-8.700z" />
          <path fill="#0c59a4" d="M5.800 8.500c-.8 3.500 3 6.500 8.700 4.800-2 2.500-5 3.300-7.500 2.700C3.500 15 3 10 5.800 8.500z" />
        </svg>
      </TaskButton>
      <TaskButton aria-label="L app">
        <svg width="16" height="16"><rect width="16" height="16" fill="#1f3fae" /><path fill="none" stroke="#fff" strokeWidth="2" d="M6 3.500V11h5" /></svg>
      </TaskButton>
      <TaskButton aria-label="Mail">
        <svg width="16" height="14" viewBox="0 0 16 14"><path fill="#1467b8" d="M0 5 8 0l8 5v3H0z" /><path fill="#fff" d="M1 5h14L8 10z" /><path fill="#38b1ee" d="M0 5l8 5.500L16 5v9H0z" /><path fill="#1d8fdc" d="M0 14l8-5 8 5z" opacity=".6" /></svg>
      </TaskButton>
      <TaskButton aria-label="WhatsApp" $open><FaWhatsapp size={18} color="#25d366" /></TaskButton>
      <TaskButton aria-label="File Explorer">
        <svg width="16" height="14" viewBox="0 0 16 14"><path fill="#e8a00c" d="M0 0h6l1.500 2H16v3H0z" /><path fill="#ffd766" d="M0 3h16v11H0z" /><path fill="#3a96dd" d="M3 14V8.500L4 7h8l1 1.500V14h-2.500v-3h-5v3z" /></svg>
      </TaskButton>
      <TaskButton aria-label="Chrome"><ChromeLogo /></TaskButton>
      <TaskButton aria-label="Chrome profile" $open><ChromeLogo badge="#7a5c48" /></TaskButton>
      <TaskButton aria-label="Chrome work" $open $active><ChromeLogo badge="#5c7a70" /></TaskButton>
      <TaskButton aria-label="Excel" $open>
        <svg width="16" height="16" viewBox="0 0 16 16"><path fill="#e8f3e4" stroke="#3f8f45" d="M1.500 3l2-2.500h10v12h-12z" /><path fill="#fff" stroke="#8fc08f" d="M5 5l10-1v11.500l-10-1z" /><path stroke="#2f8a3a" strokeWidth="1.800" d="M7 7l5 6M12 7l-5 6" /></svg>
      </TaskButton>
      <Tray>
        <svg width="24" height="16" viewBox="0 0 24 16" fill="none" stroke="#fff" strokeWidth="1.400">
          <path d="M1 1h19v14H1zM20 3h3v10c0 1.500-1 2-2 2M3 4.500h15M12 8h6M12 11.500h6" /><rect x="4" y="7.500" width="5" height="4.500" />
        </svg>
        <ChevronUp size={16} strokeWidth={2} />
        <svg width="16" height="14" viewBox="0 0 16 14" fill="none" stroke="#fff">
          <path d="M1 3.500h12v7H1zM14.500 5.500v3" /><path fill="#fff" d="M2 5h2v4H2z" /><circle cx="11.500" cy="9.500" r="4" fill="#16a34a" stroke="none" /><path d="M11.500 12V9M10 9.500c0-3 3-3 3 0" />
        </svg>
        <svg width="14" height="14" viewBox="0 0 14 14" fill="none" stroke="#fff">
          <path d="M1 13C1 6 6 1 13 1M4 13c0-5 4-9 9-9M7 13c0-3 3-6 6-6" /><circle cx="11.500" cy="11.500" r="1.500" fill="#fff" stroke="none" />
        </svg>
        <svg width="17" height="14" viewBox="0 0 17 14" fill="none" stroke="#fff">
          <path d="M1 5h2.500L7 1.500v11L3.500 9H1zM9.500 5c1 1 1 3 0 4M11.500 3c2 2 2 6 0 8M13.500 1.500c3 3 3 8 0 11" />
        </svg>
        <Clock>12:14 AM</Clock>
        <svg width="18" height="17" viewBox="0 0 18 17" fill="none" stroke="#fff" strokeWidth="1.300">
          <path d="M10 13H7l-2.500 2.500V13H1V1h15v8" /><path fill="#fff" stroke="none" d="M16.500 9.500a4 4 0 1 1-5.500 5c3 0 5-2 5.500-5z" />
        </svg>
        <i />
      </Tray>
    </Taskbar>
  </>
);

const App = () => (
  <Page>
    <GlobalStyle />
    <Browser />
    <Header />
    <RibbonSection />
    <FormulaBar>
      <NameBox><input aria-label="Name box" defaultValue="A3" /><ChevronDown size={7} strokeWidth={4} /></NameBox>
      <FormulaTools>
        <button aria-label="Cancel"><X size={15} strokeWidth={1.500} /></button>
        <button aria-label="Enter"><Check size={15} strokeWidth={1.500} /></button>
        <button aria-label="Insert function">fx</button>
      </FormulaTools>
      <FormulaInput><input aria-label="Formula" defaultValue="Product Name" /><ChevronDown size={12} /></FormulaInput>
    </FormulaBar>
    <Workspace>
      <Sheet />
      <FieldsPanel />
    </Workspace>
    <Bottom />
  </Page>
);

export default App;
